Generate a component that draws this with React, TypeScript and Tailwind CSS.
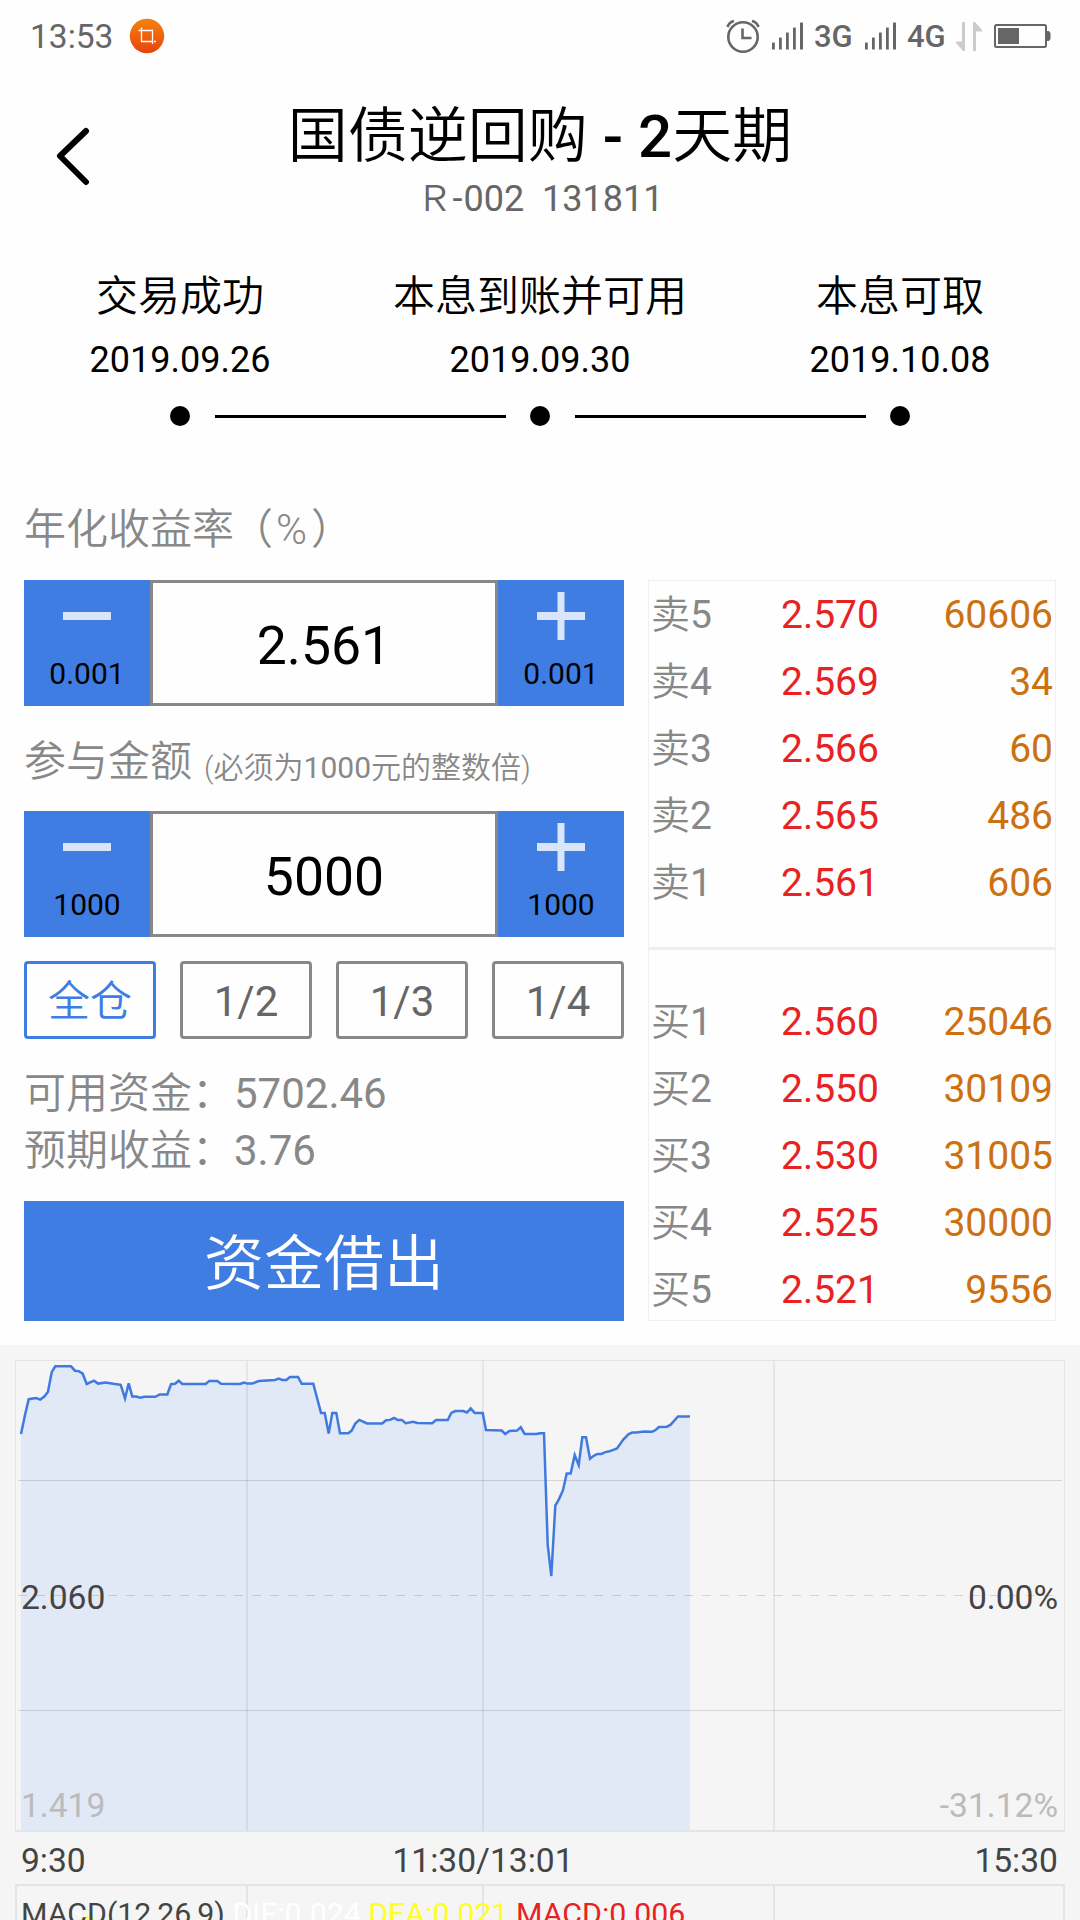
import type { ReactNode } from 'react';

interface Quote {
  label: string;
  price: string;
  volume: string;
}

const sells: Quote[] = [
  { label: '卖5', price: '2.570', volume: '60606' },
  { label: '卖4', price: '2.569', volume: '34' },
  { label: '卖3', price: '2.566', volume: '60' },
  { label: '卖2', price: '2.565', volume: '486' },
  { label: '卖1', price: '2.561', volume: '606' },
];

const buys: Quote[] = [
  { label: '买1', price: '2.560', volume: '25046' },
  { label: '买2', price: '2.550', volume: '30109' },
  { label: '买3', price: '2.530', volume: '31005' },
  { label: '买4', price: '2.525', volume: '30000' },
  { label: '买5', price: '2.521', volume: '9556' },
];

const steps = [
  { title: '交易成功', date: '2019.09.26' },
  { title: '本息到账并可用', date: '2019.09.30' },
  { title: '本息可取', date: '2019.10.08' },
];

// Intraday price line, x/y in chart pixels
const line =
  '21,89 25,70.1 28.7,54.2 36,53.1 40.3,54.6 44.3,51.6 48,46.8 51.7,27.2 55.3,21.3 71,21.3 75,25.7 78.7,26.1 82.7,28.7 86.7,39 94,35.7 98,38.6 105.7,37.5 113.3,38.8 120.7,39.8 125,53.4 128.7,38.3 132.3,51.6 136.3,51.6 140.3,52.7 144.3,51.8 155.3,51.8 159.7,49.4 167.3,49.4 171,39.2 175,38.8 178.7,35.7 182.3,39 205.7,39 209.3,35.9 217.3,35.9 221,38.8 240,39 244,37.5 247.3,38.6 252.3,38.6 258.7,36.1 275,34.9 278.7,33.5 282.3,34.9 286.3,34.9 290,32 298,32 301.7,38.8 313.3,38.8 321,67.9 324.7,67.9 328.7,88.6 332.3,67.9 336.3,67.9 340,88.2 348.3,88.2 351.7,85.6 355.3,78.6 359.3,74.9 367,78.4 382.3,78.4 386,75.3 390,74.9 394,73 397.7,74.9 401.7,74.9 405.7,78.2 413.3,76.7 417.3,77.9 432.3,78.2 436,75.1 447.7,75.1 451.3,67.9 455.3,66 463.3,66 467,67.5 470.7,63.4 474.7,67.9 482.7,67.9 486,85.1 501.7,85.6 505.3,89 509.3,86 517,85.6 520.7,82.3 524.7,89 536.3,89 540,88.2 544,88.2 547.7,199.6 551.3,231 555.3,160.7 559,154.1 563,145.2 566.7,128.5 570.7,128.5 574.7,110 578.7,120 582.3,92.3 586,92.3 590,113.7 593.7,110.8 597.3,108.9 601.3,108.9 605.3,107.1 609.3,106.3 617,103.4 623.3,94.5 628.7,89 632.3,87.5 636.3,87.5 644,86.4 652,86.7 655.3,85.3 659,82.1 667,81.7 670.7,79.7 678,71.4 690,71.4';

function Signal() {
  return (
    <svg className="w-8 h-7" viewBox="0 0 32 28" fill="#666">
      <rect x="0" y="20.500" width="2.800" height="7" rx=".5" />
      <rect x="7" y="15.500" width="2.800" height="12" rx=".5" />
      <rect x="14" y="10.500" width="2.800" height="17" rx=".5" />
      <rect x="21" y="5.500" width="2.800" height="22" rx=".5" />
      <rect x="28" y="0.500" width="3" height="27" rx=".5" />
    </svg>
  );
}

function StatusBar() {
  return (
    <div className="h-[72px] pl-[30px] pr-[29px] flex items-center text-[#666]">
      <span className="pt-0.5 text-[33.5px] leading-none">13:53</span>
      <svg className="ml-4 w-9 h-9" viewBox="0 0 36 36" fill="none">
        <defs>
          <linearGradient id="badge" x1="0" y1="0" x2="0" y2="1">
            <stop offset="0" stopColor="#f4830c" />
            <stop offset="1" stopColor="#e64310" />
          </linearGradient>
        </defs>
        <circle cx="18" cy="18" r="17.2" fill="url(#badge)" />
        <path d="M9.500 12.500h14v11M12.500 9.500v14h11M23.500 23.500v2.500M25 23.500h2" stroke="#fff" strokeWidth="1.300" />
      </svg>
      <div className="ml-auto flex items-center">
        <svg className="w-[34px] h-[34px]" viewBox="0 0 34 34" fill="none" stroke="#666" strokeWidth="2.600">
          <circle cx="17" cy="18" r="14.700" />
          <path d="M16.500 9.500v9.500h9" />
          <path d="M1.500 8C2.500 5 5 2.600 8 2M26 2c3 .6 5.500 3 6.500 6" />
        </svg>
        <span className="ml-3"><Signal /></span>
        <span className="ml-2.5 w-[41px] text-[31px] leading-none font-medium">3G</span>
        <span className="ml-2.5"><Signal /></span>
        <span className="ml-2.5 w-[39px] text-[31px] leading-none font-medium">4G</span>
        <svg className="ml-2.5 w-[26px] h-[29px]" viewBox="0 0 26 29" fill="#ccc">
          <path d="M6 0h3v29H7L0 21v-1.500h6zM17 29h3V9.500h6V8L19 0h-2z" />
        </svg>
        <svg className="ml-3 w-[57px] h-6" viewBox="0 0 57 24">
          <rect x="1" y="1" width="51" height="22" rx="1.500" fill="none" stroke="#666" strokeWidth="2" />
          <rect x="4" y="4" width="21" height="16" fill="#666" />
          <path d="M53 7h2l1.500 2v6L55 17h-2z" fill="#666" />
        </svg>
      </div>
    </div>
  );
}

function StepButton({ plus, step }: { plus?: boolean; step: string }) {
  return (
    <button className="w-[126px] h-[126px] bg-[#407de3] flex flex-col items-center">
      <svg className="mt-3 w-12 h-12" viewBox="0 0 48 48" fill="#d9e5f9">
        <rect x="0" y="20" width="48" height="8" />
        {plus && <rect x="20.500" y="0" width="7" height="48" />}
      </svg>
      <span className="mt-[19px] text-[30px] leading-[30px]">{step}</span>
    </button>
  );
}

function Stepper({ value, step }: { value: string; step: string }) {
  return (
    <div className="flex">
      <StepButton step={step} />
      <div className="w-[348px] h-[126px] pt-1.5 border-[3px] border-[#888] flex items-center justify-center text-[53.500px] leading-none">
        {value}
      </div>
      <StepButton step={step} plus />
    </div>
  );
}

function QuoteRow({ label, price, volume }: Quote) {
  return (
    <div className="h-[67px] shrink-0 pt-[2px] pl-[2px] pr-[2px] flex items-center text-[39px] leading-none">
      <span className="w-[130px] text-[#888]"><span className="font-[350]">{label[0]}</span>{label[1]}</span>
      <span className="text-[#e82222]">{price}</span>
      <span className="ml-auto text-[#cc7010]">{volume}</span>
    </div>
  );
}

function Label({ children }: { children: ReactNode }) {
  return <div className="h-[60px] text-[42px] leading-[60px] text-[#888] font-[350] whitespace-pre">{children}</div>;
}

function Chart() {
  return (
    <div className="h-[575px] bg-[#f5f5f5] overflow-hidden text-[#444]">
      <svg className="block w-[1080px] h-[488px]" viewBox="0 0 1080 488" fontSize="33.6">
        <rect x="15.500" y="15.500" width="1049" height="470.500" fill="none" stroke="#e4e4e4" />
        <path d="M15 486h1050" stroke="#e4e4e4" strokeWidth="2" />
        <path d={`M21,486 L${line} L690,486Z`} fill="#e1e8f6" />
        <path d="M247 16v470M483 16v470M774 16v470" stroke="#000" strokeOpacity=".06" strokeWidth="2" />
        <path d="M18 135.500h1044M18 365.500h1044" stroke="#000" strokeOpacity=".13" />
        <path d="M18 250.500h1044" stroke="#000" strokeOpacity=".13" strokeDasharray="9 9" />
        <polyline points={line} fill="none" stroke="#407ae0" strokeWidth="2.500" />
        <text x="21" y="264" fill="#444">2.060</text>
        <text x="21" y="472" fill="#bbb">1.419</text>
        <text x="1058" y="264" textAnchor="end" fill="#444">0.00%</text>
        <text x="1058" y="472" textAnchor="end" fill="#bbb">-31.12%</text>
      </svg>
      <div className="h-[51px] pt-1 pl-[21px] pr-[22px] grid grid-cols-[200px_524px_1fr] items-center text-[33.600px] leading-none">
        <span>9:30</span>
        <span className="text-center">11:30/13:01</span>
        <span className="text-right">15:30</span>
      </div>
      <div className="relative ml-[15px] w-[1050px] h-[60px] border-2 border-[#e4e4e4]">
        <svg className="absolute left-0 top-0 w-[1046px] h-9" viewBox="0 0 1046 36" fill="none">
          <path d="M230 0v36M466 0v36M757 0v36" stroke="#e4e4e4" strokeWidth="2" />
          <path d="M56 25l12 7" stroke="#fff" strokeWidth="2" />
          <path d="M67 32q5-2 9 1" stroke="#ff2" strokeWidth="2" />
        </svg>
        <div className="relative pl-1 pt-[10px] flex gap-[7.500px] text-[30.300px] leading-[36px] whitespace-nowrap">
          <span>MACD(12,26,9)</span>
          <span className="text-white">DIF:0.024</span>
          <span className="text-[#ff2]">DEA:0.021</span>
          <span className="text-[#e82222]">MACD:0.006</span>
        </div>
      </div>
    </div>
  );
}

export default function App() {
  return (
    <div className="w-[1080px] h-[1920px] overflow-hidden bg-[#fefefe] text-black font-['Roboto','Noto_Sans_CJK_SC',sans-serif]">
      <StatusBar />

      {/* Header */}
      <header className="h-[178px] px-[54px] flex">
        <svg className="mt-[54px] w-9 h-[60px]" viewBox="0 0 36 60" fill="none" stroke="#000" strokeWidth="6" strokeLinecap="round" strokeLinejoin="round">
          <path d="M32 5L6 30l26 26" />
        </svg>
        <div className="flex-1 mr-9 pt-[25px] text-center">
          <h1 className="h-[78px] text-[60px] leading-[80px] font-[350] whitespace-pre">
            国债逆回购<span className="font-medium"> - 2</span>天期
          </h1>
          <p className="text-[36px] leading-[48px] text-[#666] whitespace-pre">
            <span className="font-[350]">Ｒ</span><span className="tracking-[1px]">-</span>002  131811
          </p>
        </div>
      </header>

      {/* Settlement timeline */}
      <div className="h-[186px] grid grid-cols-3 -mt-px">
        {steps.map(({ title, date }, i) => (
          <div key={date} className="relative flex flex-col items-center">
            <p className="mt-[18px] h-[60px] text-[42px] leading-[60px] font-[350] whitespace-nowrap">{title}</p>
            <p className="mt-2 h-[50px] text-[36px] leading-[50px]">{date}</p>
            <div className="mt-[21px] w-5 h-5 rounded-full bg-black" />
            {i < 2 && <div className="absolute left-[215px] top-[166px] w-[291px] h-[3px] bg-black" />}
          </div>
        ))}
      </div>

      <div className="pt-[65px] px-6 flex justify-between h-[910px]">
        {/* Order form */}
        <section className="w-[600px]">
          <Label>
            年化收益率<span className="-ml-[3px] mr-[3px]">（</span>
            <span>%</span>
            <span className="ml-1">）</span>
          </Label>
          <div className="h-5" />
          <Stepper value="2.561" step="0.001" />
          <div className="h-[26px]" />
          <Label>
            参与金额
            <span className="inline-block ml-3 pt-0.5 align-[-2px] text-[30px] leading-none">
              (必须为<span className="font-normal">1000</span>元的整数倍)
            </span>
          </Label>
          <div className="h-[19px]" />
          <Stepper value="5000" step="1000" />
          <div className="mt-6 grid grid-cols-4 gap-6 text-[42px] text-[#666]">
            <button className="h-[78px] pt-1 border-[3px] border-[#407de3] rounded text-[#407de3] leading-none font-[350]">全仓</button>
            {['1/2', '1/3', '1/4'].map(f => (
              <button key={f} className="h-[78px] pt-1 border-[3px] border-[#888] rounded leading-none">{f}</button>
            ))}
          </div>
          <div className="mt-[26px] text-[42px] leading-[57px] text-[#888]">
            <p><span className="font-[350]">可用资金：</span>5702.46</p>
            <p><span className="font-[350]">预期收益：</span>3.76</p>
          </div>
          <button className="mt-[22px] w-full h-[120px] pt-2 bg-[#407de3] text-white text-[60px] leading-none font-[350]">资金借出</button>
        </section>

        {/* Order book */}
        <section className="mt-20 w-[408px] h-[741px] border border-[#f0f0f0] flex flex-col">
          {sells.map(q => <QuoteRow key={q.label} {...q} />)}
          <div className="mt-[31px] mb-[38px] h-[3px] shrink-0 bg-[#eee]" />
          {buys.map(q => <QuoteRow key={q.label} {...q} />)}
        </section>
      </div>

      <Chart />
    </div>
  );
}
